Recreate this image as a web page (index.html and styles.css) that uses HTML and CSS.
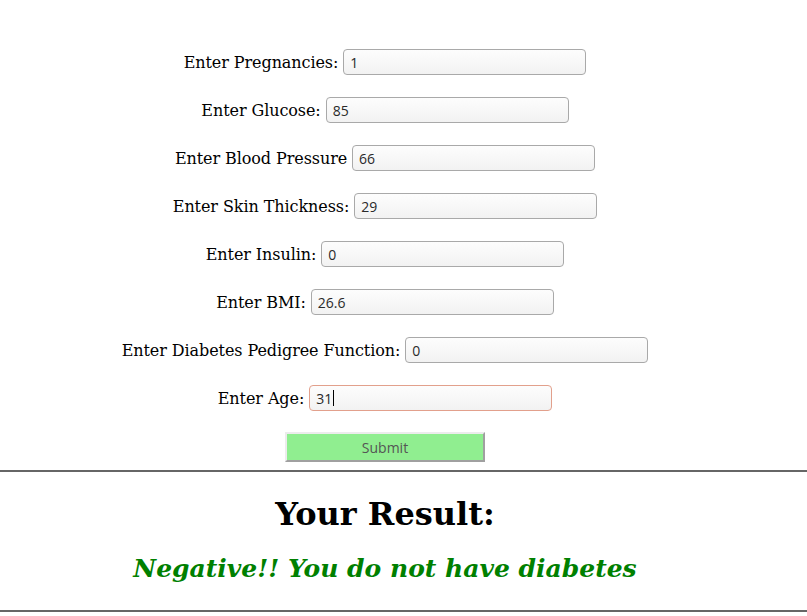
FILE: index.html
```html
<!DOCTYPE html>
<html>
<head>
<meta charset="utf-8">
<link rel="stylesheet" href="styles.css">
</head>
<body>
<div class="page">
  <form class="form">
    <div class="row"><label class="lbl">Enter Pregnancies:</label><input class="field" type="text" value="1"></div>
    <div class="row"><label class="lbl">Enter Glucose:</label><input class="field" type="text" value="85"></div>
    <div class="row"><label class="lbl">Enter Blood Pressure</label><input class="field" type="text" value="66"></div>
    <div class="row"><label class="lbl">Enter Skin Thickness:</label><input class="field" type="text" value="29"></div>
    <div class="row"><label class="lbl">Enter Insulin:</label><input class="field" type="text" value="0"></div>
    <div class="row"><label class="lbl">Enter BMI:</label><input class="field" type="text" value="26.6"></div>
    <div class="row"><label class="lbl">Enter Diabetes Pedigree Function:</label><input class="field" type="text" value="0"></div>
    <div class="row"><label class="lbl">Enter Age:</label><div class="field focus"><span>31</span><span class="caret"></span></div></div>
    <div class="row submit-row"><button class="submit" type="button">Submit</button></div>
  </form>
</div>
<hr class="rule">
<div class="page result">
  <h1 class="title">Your Result:</h1>
  <h2 class="verdict">Negative!! You do not have diabetes</h2>
</div>
<hr class="rule">
</body>
</html>
```
FILE: styles.css
```css
html, body {
  margin: 0;
  padding: 0;
  background: #fff;
}
body {
  font-family: "DejaVu Serif", serif;
  font-size: 16px;
  color: #000;
}
.page {
  width: 770px;
}
.form {
  display: flex;
  flex-direction: column;
  gap: 22px;
  padding-top: 49px;
  margin: 0;
}
.row {
  display: flex;
  justify-content: center;
  align-items: center;
  height: 26px;
}
.lbl {
  margin-right: 5px;
  white-space: nowrap;
  letter-spacing: -0.08px;
}
.field {
  box-sizing: border-box;
  width: 243px;
  height: 26px;
  border: 1px solid #a9a9a9;
  border-radius: 4px;
  background: linear-gradient(#fdfdfd, #f2f2f2);
  font-family: "Open Sans", "DejaVu Sans", sans-serif;
  font-size: 14px;
  color: #2a2a2a;
  padding: 0 6px;
  outline: none;
}
div.field {
  display: flex;
  align-items: center;
}
.caret {
  display: inline-block;
  width: 1px;
  height: 16px;
  background: #000;
  margin-left: 1px;
}
.field.focus {
  border-color: #e2a08c;
}
.submit-row {
  height: 30px;
  margin-top: -1px;
}
.submit {
  box-sizing: border-box;
  width: 200px;
  height: 30px;
  background: #90ee90;
  border: 2px solid;
  border-color: #ececec #a0a0a0 #a0a0a0 #ececec;
  font-family: "Open Sans", "DejaVu Sans", sans-serif;
  font-size: 14px;
  color: #555;
  padding: 0;
}
.rule {
  margin: 8px 0 0;
  border: 0;
  border-top: 2px solid #666;
  height: 0;
}
.result {
  text-align: center;
  padding-top: 22px;
  padding-bottom: 18px;
}
.title {
  margin: 0;
  font-size: 32px;
  font-weight: bold;
  line-height: 40px;
}
.verdict {
  margin: 20px 0 0;
  font-size: 25px;
  font-weight: bold;
  font-style: italic;
  color: #008000;
  line-height: 30px;
}
```
